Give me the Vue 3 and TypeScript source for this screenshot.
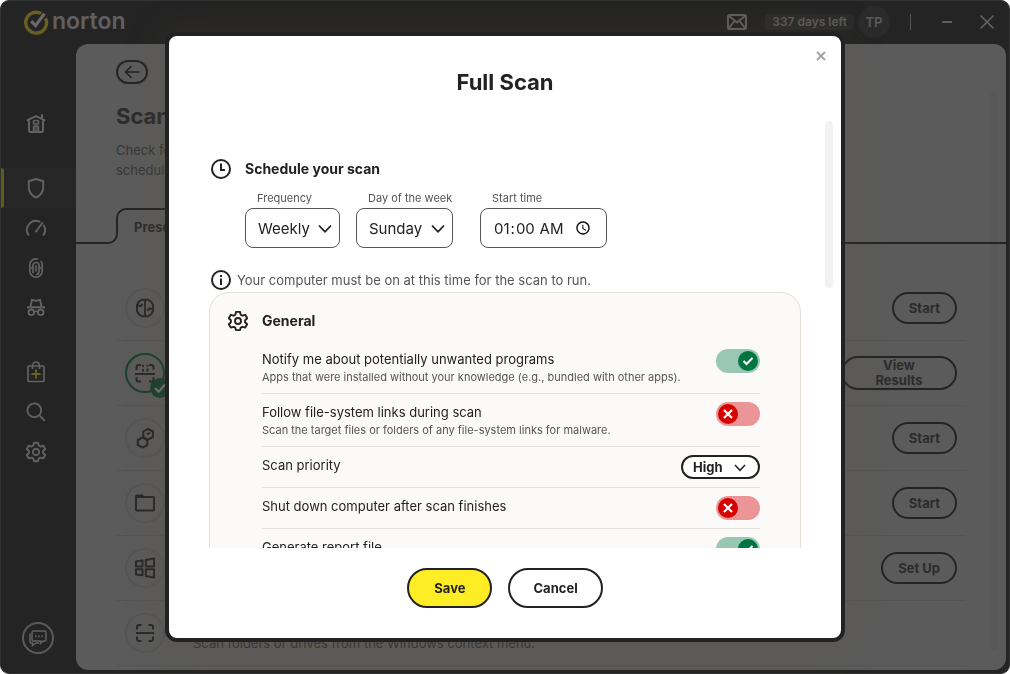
<script setup lang="ts">
import { ref, reactive } from 'vue'

interface NavItem {
  id: string
  label: string
  active?: boolean
  spaced?: boolean
}

interface ScanRow {
  id: string
  action?: string
  done?: boolean
  note?: string
}

interface Setting {
  id: string
  label: string
  note?: string
  kind: 'toggle' | 'select'
  on?: boolean
}

const nav: NavItem[] = [
  { id: 'home', label: 'Home' },
  { id: 'shield', label: 'Security', active: true, spaced: true },
  { id: 'gauge', label: 'Performance' },
  { id: 'finger', label: 'Identity' },
  { id: 'spy', label: 'Privacy' },
  { id: 'bag', label: 'Store', spaced: true },
  { id: 'search', label: 'Search' },
  { id: 'gear', label: 'Settings' },
]

const scans: ScanRow[] = [
  { id: 'smart', action: 'Start' },
  { id: 'full', action: 'View Results', done: true },
  { id: 'targeted', action: 'Start' },
  { id: 'folder', action: 'Start' },
  { id: 'boot', action: 'Set Up' },
  { id: 'context', note: 'Scan folders or drives from the Windows context menu.' },
]

const settings = reactive<Setting[]>([
  {
    id: 'pup',
    label: 'Notify me about potentially unwanted programs',
    note: 'Apps that were installed without your knowledge (e.g., bundled with other apps).',
    kind: 'toggle',
    on: true,
  },
  {
    id: 'links',
    label: 'Follow file-system links during scan',
    note: 'Scan the target files or folders of any file-system links for malware.',
    kind: 'toggle',
    on: false,
  },
  { id: 'priority', label: 'Scan priority', kind: 'select' },
  { id: 'shutdown', label: 'Shut down computer after scan finishes', kind: 'toggle', on: false },
  { id: 'report', label: 'Generate report file', kind: 'toggle', on: true },
])

const frequency = ref('Weekly')
const day = ref('Sunday')
const startTime = ref('01:00')
const priority = ref('High')
</script>

<template>
  <div class="window">
    <header class="titlebar">
      <div class="brand">
        <svg width="26" height="26" viewBox="0 0 26 26" fill="none">
          <path d="M18.2 4.6A10.4 10.4 0 1 0 22.6 9.4" stroke="#6a5f22" stroke-width="3.4" />
          <path d="M8.2 12.2l4.3 4.4L21.4 4.8" stroke="#696969" stroke-width="3.2" />
        </svg>
        <span>norton</span>
      </div>
      <div class="tools">
        <button class="mail" aria-label="Messages">
          <svg width="20" height="16" viewBox="0 0 20 16" fill="none" stroke="#5e5e5e" stroke-width="2">
            <rect x="1" y="1" width="18" height="14" rx="1.5" />
            <path d="M1.5 1.5L10 8.5l8.5-7M1.5 14.5L7.5 7M18.5 14.5L12.5 7" />
          </svg>
        </button>
        <span class="days">337 days left</span>
        <span class="avatar">TP</span>
        <span class="divider"></span>
        <button class="min" aria-label="Minimize">
          <svg width="12" height="16" viewBox="0 0 12 16"><path d="M1 8h10" stroke="#5e5e5e" stroke-width="2" /></svg>
        </button>
        <button class="quit" aria-label="Close window">
          <svg width="16" height="16" viewBox="0 0 16 16"><path d="M1.5 1.5l13 13M14.5 1.5l-13 13" stroke="#666" stroke-width="1.5" /></svg>
        </button>
      </div>
    </header>

    <div class="body">
      <nav class="sidebar" aria-label="Main">
        <a v-for="item in nav" :key="item.id" href="#" class="nav-item"
          :class="{ active: item.active, spaced: item.spaced }" :aria-label="item.label">
          <svg width="24" height="24" viewBox="0 0 24 24" fill="none" stroke="#626262" stroke-width="2">
            <g v-if="item.id === 'home'">
              <path d="M3.5 8.200L12 4l8.500 4.200M18 3v4M5 8.500V18.500A1.500 1.500 0 0 0 6.500 20h11a1.500 1.500 0 0 0 1.500-1.500V8.500" stroke-linecap="round" />
              <path d="M9.500 19.500V15a1 1 0 0 1 1-1h3a1 1 0 0 1 1 1v4.500z" stroke-width="1.500" fill="#4a4a4a" />
              <rect x="9.500" y="8.500" width="5" height="3.500" rx="1" stroke-width="1.700" />
            </g>
            <path v-else-if="item.id === 'shield'" d="M12 3l7.200 2.300v6.200c0 4.500-3.200 8.600-7.200 10-4-1.400-7.200-5.500-7.200-10V5.300z" stroke-linejoin="round" />
            <path v-else-if="item.id === 'gauge'" stroke-width="1.900" stroke-linecap="round" d="M4.500 19A9 9 0 0 1 15.500 5.700M19.800 9.500A9 9 0 0 1 19.500 19M12 15.500L18.300 7" />
            <g v-else-if="item.id === 'finger'" stroke-width="1.700">
              <path d="M14 3.200A6.200 6.200 0 0 0 5.800 9v6a6.200 6.200 0 0 0 12.400 0V9a6 6 0 0 0-1.500-4" />
              <path d="M9 17.200V9.500a3 3 0 0 1 6 0v6a3 3 0 0 1-3 3M12 9.500v6M6 12h3M15 12h3" />
            </g>
            <g v-else-if="item.id === 'spy'" stroke-width="1.900">
              <path d="M3 11.200h18M6.300 11L8 3.800l4 1 4-1L17.700 11" stroke-linejoin="round" />
              <circle cx="7.300" cy="16.300" r="2.800" /><circle cx="16.700" cy="16.300" r="2.800" />
              <path d="M10 16c1-.9 3-.9 4 0" />
            </g>
            <g v-else-if="item.id === 'bag'" stroke-width="1.700">
              <rect x="4" y="6" width="16" height="15.500" rx="1" />
              <path d="M8.500 9V5.500a3.500 3.500 0 0 1 7 0V9" />
              <path d="M12 9.500v9M7.500 14h9" stroke="#6a5f22" stroke-width="2" />
            </g>
            <g v-else-if="item.id === 'search'" stroke-width="1.900">
              <circle cx="10.300" cy="10.300" r="6.900" /><path d="M15.200 15.200l5.600 5.600" />
            </g>
            <path v-else stroke-width="1.900" stroke-linejoin="round" d="M10 2.700h4l.7 2.800 1.700 1 2.800-.9 2 3.400-2.100 2v2l2.100 2-2 3.400-2.800-.8-1.700.9-.7 2.800h-4l-.7-2.800-1.700-.9-2.800.8-2-3.400 2.100-2v-2l-2.100-2 2-3.400 2.800.9 1.700-1zM12 8.800a3.200 3.200 0 1 0 .01 0" />
          </svg>
        </a>
        <button class="chat" aria-label="Chat">
          <svg width="20" height="18" viewBox="0 0 20 18" fill="none" stroke="#626262" stroke-width="1.500">
            <path d="M5.500 2h11a1.500 1.500 0 0 1 1.500 1.500v7a1.500 1.500 0 0 1-1.500 1.500H15l-2.500 2.500V12h-7A1.500 1.500 0 0 1 4 10.500v-7A1.500 1.500 0 0 1 5.500 2z" />
            <path d="M2 4.500V13a1 1 0 0 0 1 1h1.500v2.500L8 14h3" /><path d="M7 7.200h1.500M10.200 7.200h1.500M13.400 7.200h1.500" stroke-width="2" />
          </svg>
        </button>
      </nav>

      <main class="panel">
        <button class="back" aria-label="Back">
          <svg width="16" height="14" viewBox="0 0 16 14" fill="none" stroke="#242424" stroke-width="1.700"><path d="M15.500 7H2M7.500 1L1.500 7l6 6" /></svg>
        </button>
        <h1>Scans</h1>
        <p class="intro">Check for<br />schedule</p>
        <div class="tabs">
          <svg width="50" height="36" viewBox="0 0 50 36" fill="none" stroke="#242424" stroke-width="2">
            <path d="M0 35H32a9 9 0 0 0 9-9V10a9 9 0 0 1 9-9" />
          </svg>
          <button class="tab">Preset Scans</button>
          <span class="tab-rest"></span>
        </div>
        <ul class="scans">
          <li v-for="row in scans" :key="row.id">
            <span class="disc" :class="{ done: row.done }">
              <svg width="24" height="24" viewBox="0 0 24 24" fill="none" stroke="#292929" stroke-width="2">
                <g v-if="row.id === 'smart'" stroke-linejoin="round">
                  <path d="M9 3.800h6l3 1.700 2 3.500v6l-2 3.500-3 1.700H9l-3-1.700L4 15V9l2-3.500z" />
                  <path d="M12 4v16M5 9.500l3 .5 1.500-2M19 13l-3-.5-1.500 2.500" stroke-width="1.800" />
                </g>
                <g v-else-if="row.id === 'full'">
                  <path d="M2 13h20M3.500 9V6a2 2 0 0 1 2-2H8M16 4h2.500a2 2 0 0 1 2 2v3M3.500 16v2.500a2 2 0 0 0 2 2H8M16 20.500h2.500a2 2 0 0 0 2-2V16M10 4v2M10 8v2.500M14.500 4v1.500M14.500 7.500v3" />
                </g>
                <g v-else-if="row.id === 'targeted'" stroke-linejoin="round">
                  <path d="M15 2.800l5 2.700v5.500l-5 2.700-4.700-2.700V5.500zM9.500 11.500l4.800 2.500v5l-4.800 2.600-4.700-2.600v-5zM14 8.500l3-2" />
                </g>
                <g v-else-if="row.id === 'folder'" stroke-width="2">
                  <path d="M4 6h16a1 1 0 0 1 1 1v11.500a1 1 0 0 1-1 1H4a1 1 0 0 1-1-1V5.500a1 1 0 0 1 1-1h5L10.500 6" stroke-linejoin="round" />
                  <path d="M3 5.300h7" />
                </g>
                <g v-else-if="row.id === 'boot'" stroke-linejoin="round">
                  <path d="M3 5.500l6.500-.9v6H3zM12.800 4l8.200-1.500v8.100h-8.200zM3 13.300h6.500v6L3 18.500zM12.800 13.300H21v8.200L12.800 20z" />
                </g>
                <path v-else d="M3 12h18M4 8.500V6a2 2 0 0 1 2-2h2.500M15.500 4H18a2 2 0 0 1 2 2v2.500M4 15.500V18a2 2 0 0 0 2 2h2.500M15.500 20H18a2 2 0 0 0 2-2v-2.500" />
              </svg>
              <svg v-if="row.done" class="tick" width="20" height="20" viewBox="0 0 20 20" fill="none">
                <circle cx="10" cy="10" r="10" fill="#1b3f2f" /><path d="M5 10l3.700 3.700L15 6.500" stroke="#747474" stroke-width="2" />
              </svg>
            </span>
            <span class="row-note">{{ row.note }}</span>
            <button v-if="row.action" class="row-action" :class="{ wide: row.done }">{{ row.action }}</button>
          </li>
        </ul>
        <span class="panel-thumb"></span>
      </main>
    </div>

    <section class="dialog" role="dialog" aria-modal="true" aria-labelledby="dialog-title">
      <button class="dismiss" aria-label="Close">
        <svg width="10" height="10" viewBox="0 0 10 10"><path d="M1 1l8 8M9 1L1 9" stroke="#a3a3a3" stroke-width="2" /></svg>
      </button>
      <h2 id="dialog-title">Full Scan</h2>
      <div class="viewport">
        <div class="heading">
          <svg width="20" height="20" viewBox="0 0 20 20" fill="none" stroke="#222" stroke-width="2"><circle cx="10" cy="10" r="9" /><path d="M10 4.500V11h4" /></svg>
          <h3>Schedule your scan</h3>
        </div>
        <div class="fields">
          <div class="field frequency">
            <label for="frequency">Frequency</label>
            <div class="picker">
              <select id="frequency" v-model="frequency"><option>Weekly</option></select>
              <svg width="14" height="10" viewBox="0 0 14 10" fill="none" stroke="#222" stroke-width="1.800"><path d="M1 1.500l6 6.300 6-6.300" /></svg>
            </div>
          </div>
          <div class="field day">
            <label for="day">Day of the week</label>
            <div class="picker">
              <select id="day" v-model="day"><option>Sunday</option></select>
              <svg width="14" height="10" viewBox="0 0 14 10" fill="none" stroke="#222" stroke-width="1.800"><path d="M1 1.500l6 6.300 6-6.300" /></svg>
            </div>
          </div>
          <div class="field time">
            <label for="time">Start time</label>
            <input id="time" v-model="startTime" type="time" />
          </div>
        </div>
        <p class="hint">
          <svg width="20" height="20" viewBox="0 0 20 20" fill="none" stroke="#222" stroke-width="2"><circle cx="10" cy="10" r="9" /><path d="M10 8.500V15M10 5v2" /></svg>
          Your computer must be on at this time for the scan to run.
        </p>
        <div class="card">
          <div class="heading">
            <svg width="20" height="20" viewBox="2 2 20 20" fill="none" stroke="#222" stroke-width="1.900" stroke-linejoin="round">
              <path d="M10 2.900h4l.7 2.800 1.700 1 2.800-.9 2 3.400-2.100 2v2l2.100 2-2 3.400-2.800-.8-1.700.9-.7 2.400h-4l-.7-2.400-1.700-.9-2.800.8-2-3.400 2.100-2v-2l-2.100-2 2-3.400 2.800.9 1.700-1z" /><circle cx="12" cy="12" r="3" />
            </svg>
            <h3>General</h3>
          </div>
          <ul class="settings">
            <li v-for="s in settings" :key="s.id">
              <div class="copy">
                <label :for="s.id">{{ s.label }}</label>
                <p v-if="s.note">{{ s.note }}</p>
              </div>
              <span v-if="s.kind === 'toggle'" class="toggle">
                <input :id="s.id" v-model="s.on" type="checkbox" role="switch" />
                <svg width="20" height="20" viewBox="0 0 20 20" fill="none" stroke="#fff" stroke-width="2">
                  <path v-if="s.on" d="M5.500 10l3 3 6-6" /><path v-else d="M6 6l8 8M14 6l-8 8" stroke-width="2.200" />
                </svg>
              </span>
              <div v-else class="picker pill">
                <select :id="s.id" v-model="priority"><option>High</option></select>
                <svg width="12" height="8" viewBox="0 0 12 8" fill="none" stroke="#222" stroke-width="1.500"><path d="M1 1l5 5.300L11 1" /></svg>
              </div>
            </li>
          </ul>
        </div>
        <span class="thumb"></span>
      </div>
      <footer>
        <button class="save">Save</button>
        <button>Cancel</button>
      </footer>
    </section>
  </div>
</template>

<style>
html,
body {
  background: #fff;
}
</style>

<style scoped>
* {
  box-sizing: border-box;
  margin: 0;
  padding: 0;
}

.window {
  display: flex;
  flex-direction: column;
  height: 100vh;
  overflow: hidden;
  border: 1px solid #323232;
  border-radius: 9px;
  background: #242424;
  color: #222;
  font-family: Inter, "Liberation Sans", sans-serif;
  font-size: 13px;
}

svg {
  display: block;
  flex: none;
}

button,
select,
input {
  font: inherit;
  color: inherit;
  background: none;
  border: 0;
}

ul {
  list-style: none;
}

.titlebar {
  display: flex;
  justify-content: space-between;
  align-items: center;
  flex: none;
  height: 43px;
  padding: 0 14px 1px 22px;
  color: #5b5b5b;
}

.brand {
  display: flex;
  align-items: center;
  gap: 3px;
  font-size: 23px;
  line-height: 24px;
  font-weight: 600;
  color: #606060;
}

.brand span {
  padding-bottom: 3px;
}

.tools {
  display: flex;
  align-items: center;
}

.days {
  margin-left: 18px;
  padding: 0 7px;
  border-radius: 4px;
  background: #2b2b2b;
  font-size: 12px;
  line-height: 16px;
  font-weight: 600;
}

.avatar {
  width: 32px;
  margin-left: 4px;
  border-radius: 16px;
  background: #2b2b2b;
  line-height: 32px;
  font-weight: 600;
  text-align: center;
}

.divider {
  width: 1px;
  height: 16px;
  margin-left: 20px;
  background: #555;
}

.min {
  margin-left: 30px;
}

.quit {
  margin-left: 26px;
}

.body {
  display: flex;
  flex: 1;
  min-height: 0;
}

.sidebar {
  display: flex;
  flex-direction: column;
  flex: none;
  width: 75px;
  padding: 60px 0 19px;
}

.nav-item {
  display: flex;
  align-items: center;
  height: 40px;
  padding-left: 23px;
}

.spaced {
  margin-top: 24px;
}

.active {
  gap: 20px;
  padding-left: 0;
  background: #272727;
}

.active::before {
  content: "";
  width: 3px;
  height: 40px;
  border-radius: 0 3px 3px 0;
  background: #625b20;
}

.chat {
  display: flex;
  align-items: center;
  justify-content: center;
  width: 32px;
  height: 32px;
  margin: auto 0 0 21px;
  border: 2px solid #5b5b5b;
  border-radius: 16px;
}

.panel {
  position: relative;
  display: flex;
  flex-direction: column;
  align-items: stretch;
  flex: 1;
  min-width: 0;
  margin: 0 3px 3px 0;
  padding-top: 16px;
  overflow: hidden;
  border-radius: 12px;
  background: #5b5b5b;
  color: #2c2c2c;
}

.back {
  display: flex;
  align-items: center;
  justify-content: center;
  flex: none;
  width: 32px;
  height: 24px;
  margin-left: 40px;
  border: 2px solid #242424;
  border-radius: 12px;
}

h1 {
  margin: 16px 0 0 40px;
  font-size: 22px;
  line-height: 32px;
  font-weight: 700;
}

.intro {
  margin: 8px 0 0 40px;
  line-height: 20px;
  color: #373737;
}

.tabs {
  position: relative;
  z-index: 1;
  display: flex;
  flex: none;
  height: 36px;
  margin-top: 28px;
}

.tab {
  padding: 0 16px 0 8px;
  border-top: 2px solid #242424;
  border-right: 2px solid #242424;
  border-top-right-radius: 10px;
  font-weight: 700;
}

.tab-rest {
  flex: 1;
  border-bottom: 2px solid #242424;
}

.scans {
  margin: 32px 40px 0;
}

.scans li {
  display: flex;
  align-items: center;
  height: 65px;
  padding: 0 9px;
  border-bottom: 1px solid #545454;
}

.disc {
  position: relative;
  display: flex;
  align-items: center;
  justify-content: center;
  flex: none;
  width: 40px;
  height: 40px;
  border: 2px solid #555;
  border-radius: 20px;
}

.done {
  border-color: #1b3f2f;
}

.tick {
  position: absolute;
  right: -7px;
  bottom: -7px;
}

.row-note {
  flex: 1;
  margin: 20px 0 0 28px;
  color: #333;
}

.row-action {
  min-height: 32px;
  padding: 0 15px;
  border: 2px solid #242424;
  border-radius: 17px;
  font-weight: 700;
  line-height: 15px;
}

.wide {
  width: 116px;
  min-height: 34px;
  padding: 0 24px;
}

.panel-thumb {
  position: absolute;
  top: 48px;
  right: 8px;
  bottom: 20px;
  width: 8px;
  border-radius: 4px;
  background: #585858;
}

.dialog {
  position: fixed;
  inset: 32px 0;
  z-index: 2;
  display: flex;
  flex-direction: column;
  width: min(680px, 100% - 32px);
  margin: 0 auto;
  border: 4px solid #222;
  border-radius: 12px;
  background: #fff;
  box-shadow: 0 4px 40px rgba(101, 88, 62, 0.25);
}

.dismiss {
  position: absolute;
  top: 15px;
  right: 15px;
}

h2 {
  margin: 30px 0 23px;
  font-size: 22px;
  line-height: 32px;
  font-weight: 700;
  text-align: center;
}

.viewport {
  position: relative;
  flex: 1;
  min-height: 0;
  padding: 38px 40px 0;
  overflow: hidden;
}

.thumb {
  position: absolute;
  top: 0;
  right: 8px;
  width: 8px;
  height: 39%;
  border-radius: 4px;
  background: #f2f2f2;
}

.heading {
  display: flex;
  align-items: center;
  gap: 14px;
  padding-left: 2px;
}

h3 {
  font-size: 14px;
  line-height: 20px;
  font-weight: 700;
}

.fields {
  display: flex;
  gap: 16px;
  margin: 11px 0 22px 36px;
}

.field label {
  display: block;
  height: 18px;
  padding-left: 12px;
  font-size: 11px;
  line-height: 16px;
  color: #555;
  white-space: nowrap;
}

.frequency {
  width: 95px;
}

.day {
  width: 97px;
}

.time {
  width: 127px;
  margin-left: 11px;
}

.picker {
  position: relative;
}

.picker select {
  display: block;
  width: 100%;
  appearance: none;
}

.field select,
.field input {
  height: 40px;
  padding: 0 12px;
  border: 1px solid #555;
  border-radius: 8px;
  font-size: 15px;
}

.field input {
  display: block;
  width: 100%;
}

.picker svg {
  position: absolute;
  top: 16px;
  right: 8px;
  pointer-events: none;
}

.hint {
  display: flex;
  align-items: center;
  gap: 6px;
  padding-left: 2px;
  font-size: 13px;
  line-height: 20px;
  color: #555;
}

.card {
  margin-top: 2px;
  padding: 18px 40px 20px 16px;
  border: 1px solid #e7e0d8;
  border-radius: 20px;
  background: #fbfaf8;
}

.settings {
  margin: 10px 0 0 36px;
}

.settings li {
  display: flex;
  align-items: flex-start;
  justify-content: space-between;
  padding: 8px 0;
  border-bottom: 1px solid #e2e1df;
}

.copy label {
  display: block;
  line-height: 20px;
}

.copy p {
  font-size: 11px;
  line-height: 16px;
  color: #555;
}

.toggle {
  position: relative;
  display: block;
  flex: none;
  width: 44px;
  height: 24px;
}

.toggle input {
  display: block;
  width: 44px;
  height: 24px;
  appearance: none;
  border-radius: 12px;
  background: #ec9596;
}

.toggle input:checked {
  background: #99c7b3;
}

.toggle svg {
  position: absolute;
  top: 2px;
  left: 2px;
  border-radius: 10px;
  background: #d60000;
  pointer-events: none;
}

.toggle input:checked + svg {
  left: 22px;
  background: #00753f;
}

.pill {
  width: 79px;
}

.pill select {
  height: 24px;
  padding: 0 10px;
  border: 2px solid #222;
  border-radius: 12px;
  background: #fff;
  font-weight: 700;
}

.pill svg {
  top: 9px;
  right: 14px;
}

footer {
  display: flex;
  justify-content: center;
  gap: 16px;
  padding: 20px 0 30px;
}

footer button {
  height: 40px;
  padding: 0 23px;
  border: 2px solid #222;
  border-radius: 20px;
  font-weight: 700;
}

footer .save {
  padding: 0 25px;
  background: #feec24;
}
</style>
